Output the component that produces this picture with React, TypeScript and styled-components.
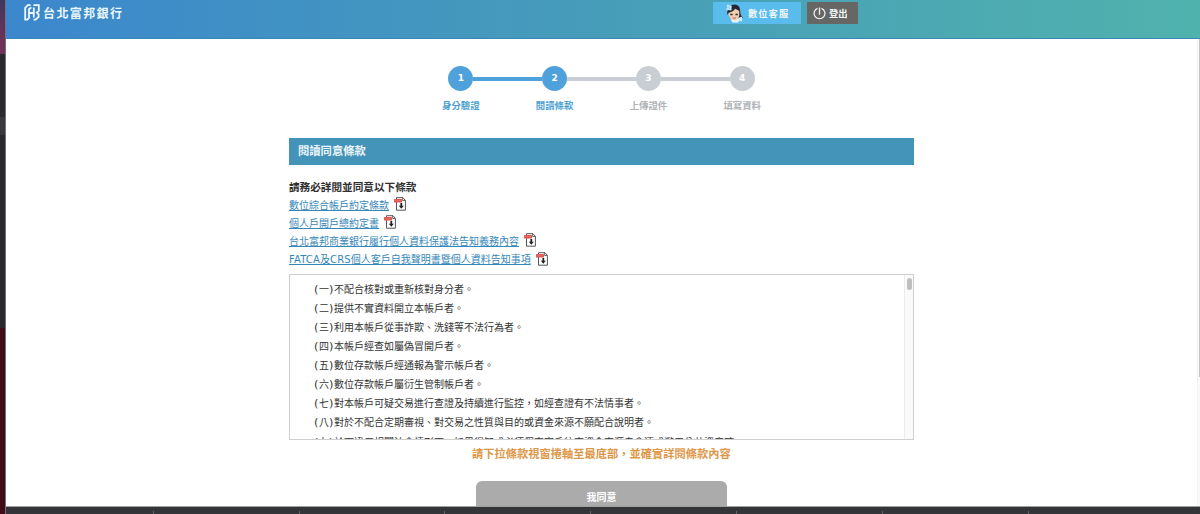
import React from "react";
import styled, { createGlobalStyle } from "styled-components";

const Global = createGlobalStyle`
  * { box-sizing: border-box; }
  html, body { margin: 0; height: 100%; overflow: hidden; }
  body { font-family: "DejaVu Sans", "Noto Sans CJK TC", sans-serif; font-size: 10px; color: #333; background: #fff; }
`;

const Screen = styled.div`
  display: flex;
  width: 1200px;
  height: 514px;
  overflow: hidden;
`;

const Desktop = styled.div`
  display: flex;
  flex-direction: column;
  width: 6px;
  border-right: 1px solid #767078;
  overflow: hidden;
`;

const DesktopBand = styled.div<{ $h: number; $bg: string }>`
  flex: 0 0 ${(p) => p.$h}px;
  background: ${(p) => p.$bg};
`;

const Browser = styled.div`
  flex: 1;
  min-width: 0;
  display: flex;
  flex-direction: column;
`;

const Header = styled.header`
  flex: 0 0 39px;
  display: flex;
  justify-content: space-between;
  align-items: flex-start;
  padding: 0 342px 0 18px;
  background: linear-gradient(90deg, #3c87cd 0%, #469db9 50%, #50b2ad 100%);
  border-bottom: 1px solid #3a86b4;
`;

const Brand = styled.div`
  display: flex;
  align-items: center;
  gap: 3px;
  height: 19px;
  margin-top: 3px;
  color: #e9f7fa;
  font-size: 12px;
  font-weight: 700;
  letter-spacing: 1.4px;
  white-space: nowrap;
`;

const HeaderActions = styled.div`
  display: flex;
  gap: 6px;
  padding-top: 2px;
`;

const HeaderButton = styled.button<{ $dark?: boolean }>`
  display: flex;
  align-items: center;
  gap: ${(p) => (p.$dark ? 3 : 4)}px;
  width: ${(p) => (p.$dark ? 51 : 88)}px;
  height: 22px;
  padding: 0 0 0 ${(p) => (p.$dark ? 6 : 12)}px;
  border: 0;
  background: ${(p) => (p.$dark ? "#666665" : "#59bcec")};
  color: #f2f6f7;
  font: 700 9.3px "Noto Sans CJK TC", sans-serif;
  letter-spacing: ${(p) => (p.$dark ? 0 : 1)}px;
  white-space: nowrap;
`;

const Viewport = styled.div`
  flex: 1;
  display: flex;
  min-height: 0;
  overflow: hidden;
`;

const Main = styled.main`
  flex: 1;
  display: flex;
  flex-direction: column;
  align-items: center;
  padding-top: 27px;
`;

const PageScroll = styled.div`
  flex: 0 0 3px;
  background: #fafafa;
  border-left: 1px solid #f3f3f3;
`;

const PageThumb = styled.div`
  width: 1px;
  height: 338px;
  margin-left: auto;
  background: #c5c5c5;
`;

const Steps = styled.ol`
  display: flex;
  list-style: none;
  margin: 0;
  padding: 0;
`;

const Step = styled.li<{ $on: boolean }>`
  display: flex;
  flex-direction: column;
  align-items: center;
  width: 93.8px;
  color: ${(p) => (p.$on ? "#4b9fd0" : "#b0b3b6")};
  font-size: 9.4px;
  font-weight: 700;
`;

const Track = styled.div`
  display: flex;
  align-items: center;
  width: 100%;
`;

const Rail = styled.span<{ $c: string }>`
  flex: 1;
  height: 4px;
  background: ${(p) => p.$c};
`;

const Dot = styled.span<{ $on: boolean }>`
  display: grid;
  place-items: center;
  width: 25px;
  height: 25px;
  border-radius: 50%;
  background: ${(p) => (p.$on ? "#4fa1dc" : "#c9ced5")};
  color: #fff;
  font-size: 9px;
  line-height: 1;
`;

const StepLabel = styled.span`
  margin-top: 8px;
  line-height: 14px;
`;

const Content = styled.section`
  width: 625px;
  margin-top: 25px;
  display: flex;
  flex-direction: column;
`;

const Title = styled.h1`
  height: 27px;
  margin: 0;
  padding-left: 9px;
  background: #4493b9;
  color: #edf6fa;
  font-size: 11.3px;
  line-height: 28px;
  font-weight: 700;
`;

const Lead = styled.h2`
  margin: 14px 0 0;
  font-size: 10.63px;
  line-height: 18px;
  font-weight: 700;
  color: #2f2f2f;
`;

const Docs = styled.div`
  margin-top: -2px;
`;

const DocRow = styled.div`
  display: flex;
  align-items: center;
  gap: 5px;
  height: 18.2px;
`;

const DocLink = styled.a`
  color: #3587b9;
  text-decoration: underline;
  text-underline-offset: 1px;
  text-decoration-thickness: 1px;
  white-space: nowrap;
`;

const Latin = styled.span`
  letter-spacing: 0.15px;
`;

const Terms = styled.div`
  display: flex;
  height: 166px;
  margin-top: 6px;
  border: 1px solid #cfcfcf;
  overflow: hidden;
`;

const TermList = styled.ul`
  flex: 1;
  margin: 0;
  padding: 5px 0 0 24px;
  list-style: none;
`;

const Term = styled.li`
  height: 19.1px;
  line-height: 19.1px;
  white-space: nowrap;
`;

const Paren = styled.span`
  display: inline-block;
  width: 5px;
  font-size: 11.2px;
  line-height: 1;
`;

const TermScroll = styled.div`
  width: 9px;
  padding: 3px 1px;
  background: #fafafa;
  border-left: 1px solid #ececec;
`;

const TermThumb = styled.div`
  width: 5px;
  height: 12px;
  margin-left: 1px;
  border-radius: 3px;
  background: #bfbfbf;
`;

const Hint = styled.p`
  margin: 6px 0 0;
  text-align: center;
  color: #de9748;
  font-size: 11.25px;
  line-height: 18px;
  font-weight: 700;
`;

const Agree = styled.button`
  align-self: center;
  width: 251px;
  height: 32px;
  margin-top: 17px;
  border: 0;
  border-radius: 6px;
  background: #ababab;
  color: #fff;
  font: 700 10px/32px "Noto Sans CJK TC", sans-serif;
  padding: 0;
`;

const BottomBar = styled.footer`
  flex: 0 0 8px;
  display: flex;
  align-items: flex-end;
  padding-left: 2px;
  background: #343539;
  border-top: 1px solid #a1a1a2;
`;

const BottomTab = styled.span`
  flex: 0 0 145.8px;
  height: 3px;
  border-right: 1px solid #626366;
`;

const Logo = () => (
  <svg width="16" height="17" viewBox="0 0 16 17" fill="none" stroke="#eef9fc" strokeWidth="1.8">
    <path d="M6.6 1.2H3.8L1.2 3.9V15.6H3.4L5 14V5.2L7.4 3.4M9.4 1.2H14.8V7L12.8 8.6L14.6 10.4V12.8L11.6 15.6H9.6M5 9H9.8M9.8 3.6V13.4" />
  </svg>
);

const Avatar = () => (
  <svg width="19" height="20" viewBox="0 0 20 20">
    <path d="M3 8Q4 1 10 1Q16 1 16 8Q16 13 19 15L15 16L13 13L5 14Z" fill="#262832" />
    <path d="M6 17Q10 14 15 17L14 20H8Z" fill="#eaf4f8" />
    <path d="M3.5 10Q8 8 10 5L15 8V13Q13 18 10 18Q4 16 3.5 10Z" fill="#f2ceb0" />
    <path d="M2.5 12Q1 5 8 2L12 4Q9 9 4 9.5Z" fill="#262832" />
    <path d="M5.5 11.5H8M11 11.5H13.5" stroke="#35262a" strokeWidth="1.5" />
    <path d="M8 15Q10 16.2 11.5 15" stroke="#c34e4e" fill="none" />
    <g fill="#bfe3f6">
      <circle cx="3" cy="5.5" r="1.6" />
      <circle cx="5.6" cy="3.5" r="1.6" />
      <circle cx="5.6" cy="6" r="1.4" />
      <circle cx="3.2" cy="2.5" r="1.4" />
    </g>
    <path d="M14 15L18 14L18 19L14 18Z" fill="#d3edf7" />
  </svg>
);

const Power = () => (
  <svg width="13" height="13" viewBox="0 0 13 13" fill="none" stroke="#edf0ef" strokeWidth="1.3">
    <path d="M4.5 1.3A5.4 5.4 0 1 0 8.5 1.3M6.5 .6V7.7" />
  </svg>
);

const PdfIcon = () => (
  <svg width="13" height="14" viewBox="0 0 13 14">
    <path d="M2.5.7H9L11.4 3.3V13.2H2.5Z" fill="#fff" stroke="#555" strokeWidth="1" />
    <path d="M8.7.7V3.5H11.4" fill="none" stroke="#555" strokeWidth=".9" />
    <rect x="0" y="2" width="8" height="3.4" rx=".5" fill="#dc5850" />
    <path d="M1.3 3.7H6.8" stroke="#e8827b" strokeWidth=".9" strokeDasharray="1.3 .7" />
    <path d="M6.4 6H8.2V8.7H9.8L7.3 11.7L4.8 8.7H6.4Z" fill="#222" />
  </svg>
);

const steps = ["身分驗證", "閱讀條款", "上傳證件", "填寫資料"];
const docs: React.ReactNode[] = [
  "數位綜合帳戶約定條款",
  "個人戶開戶總約定書",
  "台北富邦商業銀行履行個人資料保護法告知義務內容",
  <>
    <Latin>FATCA</Latin>及<Latin>CRS</Latin>個人客戶自我聲明書暨個人資料告知事項
  </>,
];
const terms: [string, string][] = [
  ["一", "不配合核對或重新核對身分者。"],
  ["二", "提供不實資料開立本帳戶者。"],
  ["三", "利用本帳戶從事詐欺、洗錢等不法行為者。"],
  ["四", "本帳戶經查如屬偽冒開戶者。"],
  ["五", "數位存款帳戶經通報為警示帳戶者。"],
  ["六", "數位存款帳戶屬衍生管制帳戶者。"],
  ["七", "對本帳戶可疑交易進行查證及持續進行監控，如經查證有不法情事者。"],
  ["八", "對於不配合定期審視、對交易之性質與目的或資金來源不願配合說明者。"],
  ["九", "於下違反相關法令情形下，如果得知或必須假定客戶往來資金來源自貪瀆或濫用公共資產時"],
];

const CURRENT = 1;
const railColor = (i: number) =>
  i < 0 || i >= steps.length - 1 ? "transparent" : i < CURRENT ? "#4fa1dc" : "#c9ced5";

export default function App() {
  return (
    <Screen lang="zh-Hant">
      <Global />
      <Desktop>
        <DesktopBand $h={40} $bg="linear-gradient(#3e3863, #6e3158)" />
        <DesktopBand $h={14} $bg="#70325a" />
        <DesktopBand $h={63} $bg="#29292e" />
        <DesktopBand $h={18} $bg="#38393d" />
        <DesktopBand $h={193} $bg="#29292e" />
        <DesktopBand $h={186} $bg="#410c17" />
      </Desktop>
      <Browser>
        <Header>
          <Brand>
            <Logo />
            台北富邦銀行
          </Brand>
          <HeaderActions>
            <HeaderButton>
              <Avatar />
              數位客服
            </HeaderButton>
            <HeaderButton $dark>
              <Power />
              登出
            </HeaderButton>
          </HeaderActions>
        </Header>
        <Viewport>
          <Main>
            <Steps>
              {steps.map((label, i) => (
                <Step key={label} $on={i <= CURRENT}>
                  <Track>
                    <Rail $c={railColor(i - 1)} />
                    <Dot $on={i <= CURRENT}>{i + 1}</Dot>
                    <Rail $c={railColor(i)} />
                  </Track>
                  <StepLabel>{label}</StepLabel>
                </Step>
              ))}
            </Steps>
            <Content>
              <Title>閱讀同意條款</Title>
              <Lead>請務必詳閱並同意以下條款</Lead>
              <Docs>
                {docs.map((d, i) => (
                  <DocRow key={i}>
                    <DocLink>{d}</DocLink>
                    <PdfIcon />
                  </DocRow>
                ))}
              </Docs>
              <Terms>
                <TermList>
                  {terms.map(([n, text]) => (
                    <Term key={n}>
                      <Paren>(</Paren>
                      {n}
                      <Paren>)</Paren>
                      {text}
                    </Term>
                  ))}
                </TermList>
                <TermScroll>
                  <TermThumb />
                </TermScroll>
              </Terms>
              <Hint>請下拉條款視窗捲軸至最底部，並確實詳閱條款內容</Hint>
              <Agree>我同意</Agree>
            </Content>
          </Main>
          <PageScroll>
            <PageThumb />
          </PageScroll>
        </Viewport>
        <BottomBar>
          {[0, 1, 2, 3, 4, 5, 6].map((i) => (
            <BottomTab key={i} />
          ))}
        </BottomBar>
      </Browser>
    </Screen>
  );
}
